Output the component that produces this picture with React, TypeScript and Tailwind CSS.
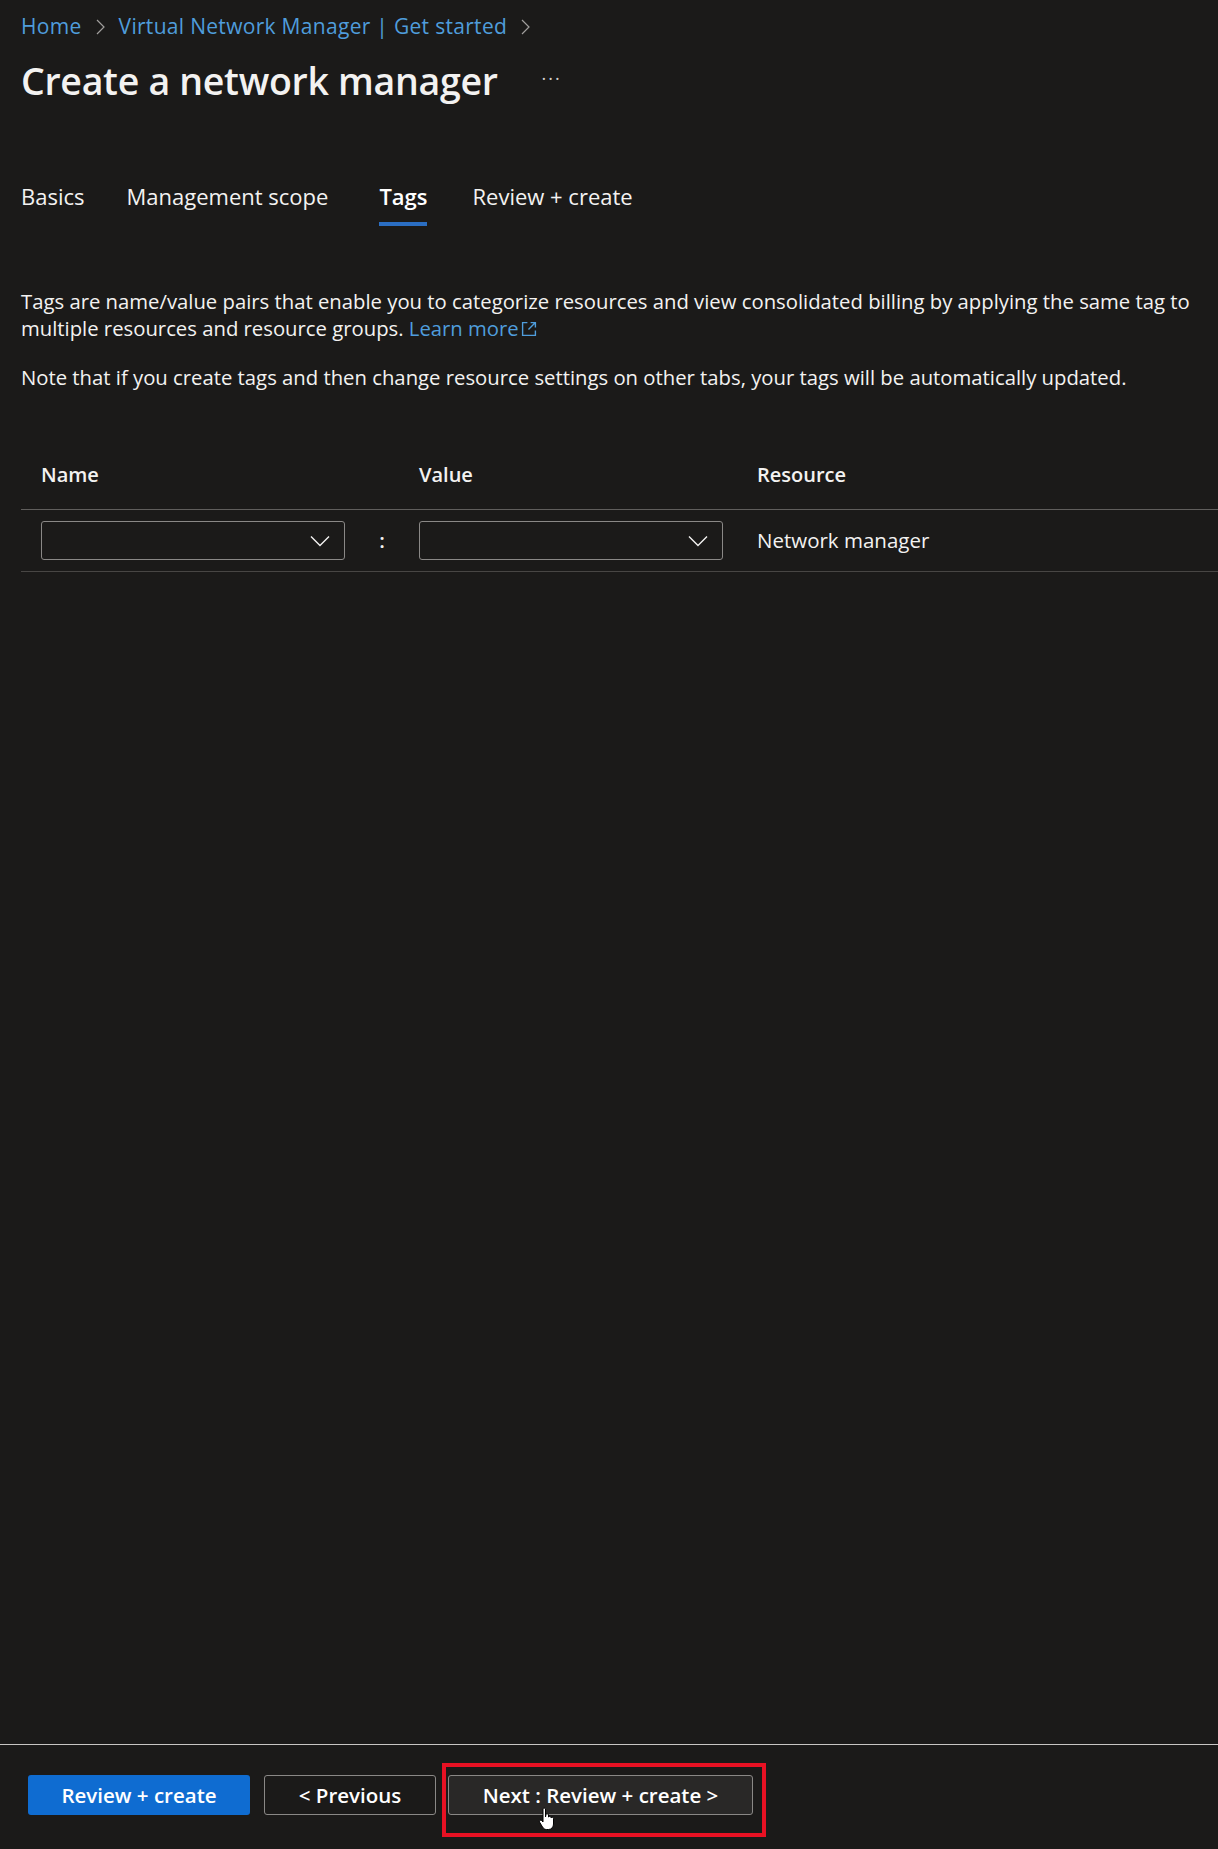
const font = { fontFamily: '"Open Sans", "Noto Sans", sans-serif' };

function Chevron() {
  return (
    <svg width="20" height="12" viewBox="0 0 20 12" fill="none" className="text-[#f3f2f1]">
      <path d="M1 1.5 L10 10.5 L19 1.5" stroke="currentColor" strokeWidth="1.4" />
    </svg>
  );
}

function Crumb() {
  return (
    <svg width="9" height="16" viewBox="0 0 9 16" fill="none" className="text-[#a19f9d] mt-[2px]">
      <path d="M1 1 L8 8 L1 15" stroke="currentColor" strokeWidth="1.2" />
    </svg>
  );
}

function Select() {
  return (
    <div className="flex items-center justify-end h-[39px] w-[304px] rounded-[3px] border border-[#8a8886] bg-[#1b1a19] pr-[14px]">
      <Chevron />
    </div>
  );
}

function ExternalIcon() {
  return (
    <svg width="16" height="16" viewBox="0 0 15 15" fill="none" className="inline-block ml-[2px] align-[-1px]">
      <path d="M6 1.5 H1.5 V13.5 H13.5 V9" stroke="currentColor" strokeWidth="1.3" />
      <path d="M9 1.5 H13.5 V6 M13.5 1.5 L7 8" stroke="currentColor" strokeWidth="1.3" />
    </svg>
  );
}

export default function App() {
  const tabs = ["Basics", "Management scope", "Tags", "Review + create"];
  return (
    <div style={font} className="min-h-[1849px] w-full bg-[#1b1a19] text-[#f3f2f1] flex flex-col">
      <div className="flex-1 px-[21px]">
        {/* Breadcrumb */}
        <div className="flex items-center gap-[14px] pt-[11px] text-[21px] leading-[30px] tracking-[0.3px] text-[#4f9ddc]">
          <span>Home</span>
          <Crumb />
          <span>Virtual Network Manager | Get started</span>
          <Crumb />
        </div>

        {/* Title */}
        <div className="flex items-center mt-[16px]">
          <h1 className="text-[37.5px] leading-[48px] font-semibold tracking-[-0.3px]">Create a network manager</h1>
          <span className="ml-[44px] text-[18px] tracking-[2px] text-[#d2d0ce] -mt-[6px]">···</span>
        </div>

        {/* Tabs */}
        <div className="flex gap-[42px] mt-[75px]">
          {tabs.map((t) => (
            <div key={t} className={`flex flex-col ${t === "Tags" ? "ml-[9px] mr-[3px]" : ""}`}>
              <span className={`text-[22px] leading-[32px] ${t === "Tags" ? "font-semibold text-white" : ""}`}>{t}</span>
              <div className={`mt-[10px] h-[4px] ${t === "Tags" ? "bg-[#2b6ec2]" : "bg-transparent"}`} />
            </div>
          ))}
        </div>

        {/* Description */}
        <div className="mt-[62px] -mr-[21px] text-[20.3px] leading-[27px]">
          <p>
            Tags are name/value pairs that enable you to categorize resources and view consolidated billing by applying the same tag to multiple resources and resource groups.{" "}
            <span className="text-[#4f9ddc]">Learn more</span>
            <span className="text-[#4f9ddc]">
              <ExternalIcon />
            </span>
          </p>
          <p className="mt-[22px]">
            Note that if you create tags and then change resource settings on other tabs, your tags will be automatically updated.
          </p>
        </div>

        {/* Table */}
        <div className="mt-[49px] -mr-[21px]">
          <div className="grid grid-cols-[378px_338px_1fr] items-center h-[70px] border-b border-[#605e5c] pl-[20px] text-[20px] font-semibold">
            <span>Name</span>
            <span>Value</span>
            <span>Resource</span>
          </div>
          <div className="flex items-center h-[62px] border-b border-[#484644] pl-[20px] text-[20.5px]">
            <Select />
            <span className="w-[74px] text-center font-semibold">:</span>
            <Select />
            <span className="ml-[34px]">Network manager</span>
          </div>
        </div>
      </div>

      {/* Footer */}
      <div className="border-t border-[#c8c6c4] h-[105px] flex items-center gap-[14px] px-[28px] pb-[4px] text-[20.5px]">
        <button className="h-[40px] w-[222px] rounded-[3px] bg-[#0f6cd1] text-white font-semibold">Review + create</button>
        <button className="h-[40px] w-[172px] rounded-[3px] border border-[#8a8886] text-white font-semibold">&lt; Previous</button>
        <div className="relative ml-[-8px] border-[4px] border-[#e81123] p-[8px_9px_18px_2px] -mb-[10px]">
          <button className="h-[40px] w-[305px] rounded-[3px] border border-[#8a8886] bg-[#292827] text-white font-semibold">
            Next : Review + create &gt;
          </button>
          <svg width="18" height="24" viewBox="0 0 18 24" className="absolute left-[92px] top-[40px]">
            <path d="M5 2 C5 0.8 7.5 0.8 7.5 2 V10 L8 7.5 C8.5 6.5 10.5 6.5 10.5 8 V10 C11 9 13 9 13 10.5 V11 C13.5 10 15.5 10 15.5 11.5 V17 C15.5 20 13.5 22.5 10.5 22.5 H8.5 C6.5 22.5 5.5 21.5 4.5 20 L1.5 15 C0.8 13.8 2.5 12.5 3.5 13.5 L5 15 Z" fill="white" stroke="black" strokeWidth="1" />
          </svg>
        </div>
      </div>
    </div>
  );
}
